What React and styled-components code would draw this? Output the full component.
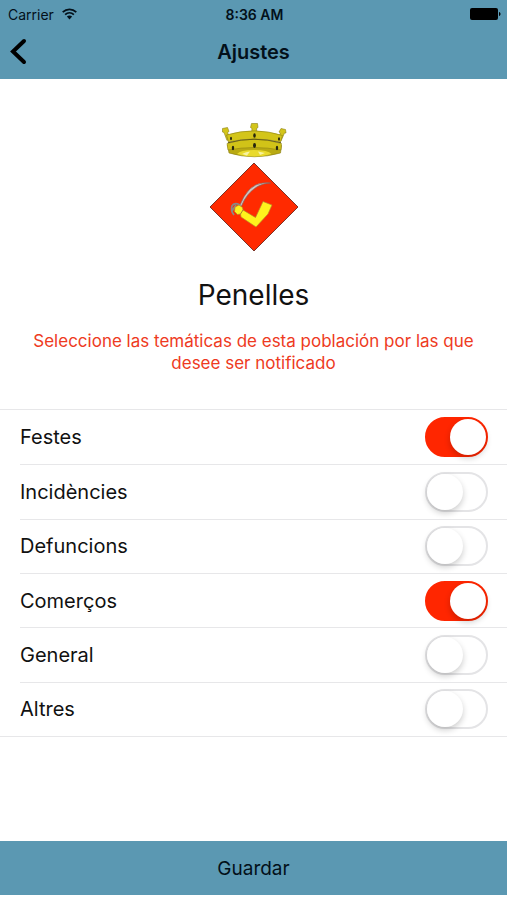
import { useState } from "react";
import styled, { createGlobalStyle } from "styled-components";

const GlobalStyle = createGlobalStyle`
  * {
    box-sizing: border-box;
  }

  body {
    margin: 0;
    background: #fff;
    color: #111;
    font-family: Inter, "Liberation Sans", sans-serif;
  }

  h1, h2, p, ul {
    margin: 0;
    padding: 0;
  }
`;

const Screen = styled.div`
  display: flex;
  flex-direction: column;
  min-height: 100vh;
  padding-bottom: 5px;
`;

const Header = styled.header`
  background: #5b98b2;
  color: #03101a;
  padding-bottom: 3px;
`;

const StatusBar = styled.div`
  display: grid;
  grid-template-columns: 1fr auto 1fr;
  align-items: center;
  height: 28px;
  padding: 0 6px 0 8px;
  font-size: 14px;
`;

const Carrier = styled.span`
  display: flex;
  align-items: center;
  gap: 8px;
`;

const Clock = styled.time`
  font-weight: 600;
`;

const BatteryIcon = styled.svg`
  justify-self: end;
`;

const NavBar = styled.nav`
  display: grid;
  grid-template-columns: 1fr auto 1fr;
  align-items: center;
  height: 48px;
  padding: 0 8px;
`;

const BackButton = styled.button`
  display: flex;
  justify-self: start;
  padding: 0;
  border: 0;
  background: none;
  color: #000;
  cursor: pointer;
`;

const Title = styled.h1`
  font-size: 20px;
  font-weight: 600;
  line-height: 24px;
`;

const Main = styled.main`
  flex: 1;
`;

const Town = styled.section`
  display: flex;
  flex-direction: column;
  align-items: center;
  padding: 42px 24px 35px;
  text-align: center;
`;

const TownName = styled.h2`
  margin-top: 24px;
  font-size: 28px;
  font-weight: 400;
  line-height: 36px;
`;

const Hint = styled.p`
  margin-top: 17px;
  color: #ee3a22;
  font-size: 17px;
  line-height: 22px;
`;

const TopicList = styled.ul`
  display: grid;
  grid-auto-rows: 1fr;
  min-height: 328px;
  border: solid #e7e7e9;
  border-width: 1px 0;
  list-style: none;
`;

const TopicRow = styled.li`
  display: flex;
  align-items: center;
  justify-content: space-between;
  margin-left: 20px;
  padding-right: 19px;

  & + & {
    border-top: 1px solid #e7e7e9;
  }
`;

const TopicLabel = styled.label`
  flex: 1;
  font-size: 20px;
  line-height: 26px;
`;

const Switch = styled.input.attrs({ type: "checkbox", role: "switch" })`
  appearance: none;
  display: flex;
  width: 63px;
  height: 40px;
  margin: 0;
  padding: 0;
  border: 2px solid #e4e4e6;
  border-radius: 20px;
  background: #fff;
  cursor: pointer;

  &::before {
    content: "";
    width: 36px;
    height: 36px;
    border-radius: 50%;
    background: #fff;
    box-shadow: 0 3px 6px rgba(0, 0, 0, 0.2);
  }

  &:checked {
    border-color: #ff2600;
    background: #ff2600;
  }

  &:checked::before {
    margin-left: auto;
  }
`;

const SaveButton = styled.button`
  width: 100%;
  height: 54px;
  border: 0;
  background: #5b98b2;
  color: #03101a;
  font-family: inherit;
  font-size: 19px;
  cursor: pointer;
`;

const topics = [
  { id: "festes", name: "Festes", on: true },
  { id: "incidencies", name: "Incidències", on: false },
  { id: "defuncions", name: "Defuncions", on: false },
  { id: "comercos", name: "Comerços", on: true },
  { id: "general", name: "General", on: false },
  { id: "altres", name: "Altres", on: false },
];

const Wifi = () => (
  <svg width="15" height="12" viewBox="0 0 15 12" aria-hidden="true">
    <g fill="none" stroke="#03101a" strokeWidth="1.7">
      <path d="M.7 4.2C4.6.3 10.4.3 14.3 4.2" />
      <path d="M3.1 6.7c2.6-2.5 6.2-2.5 8.8 0" />
    </g>
    <path d="M4.9 8.6c1.6-1.4 3.6-1.4 5.2 0l-2.6 2.8z" fill="#03101a" />
  </svg>
);

const Battery = () => (
  <BatteryIcon width="31" height="12" viewBox="0 0 31 12" aria-hidden="true">
    <rect width="28" height="12" rx="2" />
    <path d="M29 4c2 .6 2 3.4 0 4z" />
  </BatteryIcon>
);

const Chevron = () => (
  <svg width="20" height="28" viewBox="0 0 20 28" aria-hidden="true">
    <path
      d="M16 3 5 13.500l11 10.500"
      fill="none"
      stroke="currentColor"
      strokeWidth="4"
      strokeLinecap="round"
    />
  </svg>
);

const CoatOfArms = () => (
  <svg
    width="90"
    height="132"
    viewBox="0 0 90 132"
    role="img"
    aria-label="Escut de Penelles"
  >
    <g fill="#d3c51a" stroke="#8a7d14" strokeWidth=".6" strokeLinejoin="round">
      <path d="m13.500 7.500 5-1 1.500 4-1.500 1 2.500 6-3 2-3-8-1.500-.5z" />
      <path d="m76.500 8.500-4.500-1-2 3.500 1.500 1-3 6 3.500 2 3.500-8 1.500 0z" />
      <path d="M42.500 2.500h6l.5 4-1.500 1 .5 5h-5.500l.5-5-1.500-1z" />
      <path d="M17.500 14q28-8.500 56 .5l-2 6.500q-26-6-52 0z" />
      <path d="M18.500 24q27-9 54 .5L71.500 32Q45 39.500 20 32z" fill="#b9aa12" />
    </g>
    <path d="M28 33q3-4 17-4t17.500 4Q45 38 28 33z" fill="#e9da2c" />
    <path d="M33 33q4-2.500 8-2.500l-3 4zm16-2.500 7 1.500-5 2z" fill="#f8f3a2" />
    <path
      d="M18 22.500q27-8.500 54.500 0l-.5 6.500q-27-5-53 0z"
      fill="#d1c318"
      stroke="#837713"
      strokeWidth=".5"
    />
    <path
      d="M19 21.800q26-7 53 0"
      fill="none"
      stroke="#625a12"
      strokeWidth="1.100"
    />
    <g fill="#26250f">
      <ellipse cx="45.500" cy="14.500" rx="1.300" ry="2.200" />
      <ellipse cx="22" cy="17.500" rx="1" ry="1.700" />
      <ellipse cx="70" cy="18" rx="1" ry="1.700" />
      <ellipse cx="45.500" cy="24.500" rx="1.500" ry="2.400" />
      <ellipse cx="24" cy="27" rx="1.200" ry="2.200" />
      <ellipse cx="68" cy="27" rx="1.200" ry="2.200" />
    </g>
    <path
      d="M45 42 89 86 45 130 1 86z"
      fill="#ff2a00"
      stroke="#7d3428"
      strokeWidth="1"
    />
    <path
      d="M30.500 85Q39 63 54 62q4-.5 7.500 0-7 0-13 3.500Q37.500 72 32.500 85z"
      fill="#d6c4c0"
      stroke="#806662"
      strokeWidth=".7"
    />
    <path
      d="M31 84q-6-3-8 1-1.500 5 2 9m2-10-4 6"
      fill="none"
      stroke="#8a8986"
      strokeWidth="1.800"
    />
    <path
      d="m26 86 4-2 3.500 2.500.5 2.500 12.500 7.500L54 80.500l9 3.500-4 9-12 13-15-10-.5-3-3 .5-3-3z"
      fill="#fff21c"
      stroke="#b5852c"
      strokeWidth=".7"
      strokeLinejoin="round"
    />
    <path d="m34 89-2.500 4" fill="none" stroke="#a57d31" strokeWidth="1" />
  </svg>
);

const App = () => {
  const [enabled, setEnabled] = useState(
    topics.filter((topic) => topic.on).map((topic) => topic.id)
  );

  const toggle = (id) =>
    setEnabled((current) =>
      current.includes(id)
        ? current.filter((item) => item !== id)
        : [...current, id]
    );

  return (
    <>
      <GlobalStyle />
      <Screen>
        <Header>
          <StatusBar>
            <Carrier>
              Carrier
              <Wifi />
            </Carrier>
            <Clock>8:36 AM</Clock>
            <Battery />
          </StatusBar>
          <NavBar>
            <BackButton type="button" aria-label="Enrere">
              <Chevron />
            </BackButton>
            <Title>Ajustes</Title>
          </NavBar>
        </Header>

        <Main>
          <Town>
            <CoatOfArms />
            <TownName>Penelles</TownName>
            <Hint>
              Seleccione las temáticas de esta población por las que desee ser
              notificado
            </Hint>
          </Town>

          <TopicList>
            {topics.map(({ id, name }) => (
              <TopicRow key={id}>
                <TopicLabel htmlFor={id}>{name}</TopicLabel>
                <Switch
                  id={id}
                  checked={enabled.includes(id)}
                  onChange={() => toggle(id)}
                />
              </TopicRow>
            ))}
          </TopicList>
        </Main>

        <SaveButton type="button">Guardar</SaveButton>
      </Screen>
    </>
  );
};

export default App;
